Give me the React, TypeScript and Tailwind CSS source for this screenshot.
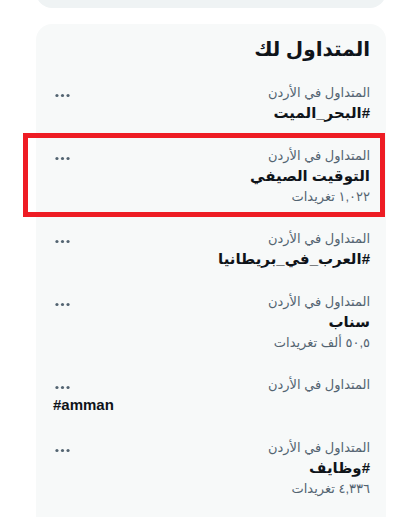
import React from "react";

type Trend = {
  context: string;
  name: string;
  count?: string;
  latin?: boolean;
  highlight?: boolean;
};

const trends: Trend[] = [
  { context: "المتداول في الأردن", name: "#البحر_الميت" },
  {
    context: "المتداول في الأردن",
    name: "التوقيت الصيفي",
    count: "١,٠٢٢ تغريدات",
    highlight: true,
  },
  { context: "المتداول في الأردن", name: "#العرب_في_بريطانيا" },
  { context: "المتداول في الأردن", name: "سناب", count: "٥٠,٥ ألف تغريدات" },
  { context: "المتداول في الأردن", name: "#amman", latin: true },
  { context: "المتداول في الأردن", name: "#وظايف", count: "٤,٣٣٦ تغريدات" },
];

function MoreIcon() {
  return (
    <svg viewBox="0 0 24 24" className="w-[19px] h-[19px] fill-[#536471]">
      <circle cx="5" cy="12" r="2" />
      <circle cx="12" cy="12" r="2" />
      <circle cx="19" cy="12" r="2" />
    </svg>
  );
}

function TrendRow({ trend }: { trend: Trend }) {
  return (
    <div className="relative flex items-start px-4 py-[11px]">
      <div className="flex flex-col flex-1">
        <span className="text-[13px] leading-[19px] text-[#536471]">
          {trend.context}
        </span>
        {trend.latin ? (
          <span
            dir="ltr"
            className="pl-[1px] text-left text-[15px] leading-[22px] font-bold text-[#0f1419]"
          >
            {trend.name}
          </span>
        ) : (
          <span className="text-[15px] leading-[22px] font-bold text-[#0f1419]">
            {trend.name}
          </span>
        )}
        {trend.count && (
          <span className="text-[13px] leading-[20px] text-[#536471]">
            {trend.count}
          </span>
        )}
      </div>
      <div className="absolute left-[17px] top-[14px]">
        <MoreIcon />
      </div>
      {/* إطار التمييز */}
      {trend.highlight && (
        <div className="absolute -left-[13px] right-[1px] top-[-2px] bottom-[1px] border-[5px] border-[#ee1c24] pointer-events-none" />
      )}
    </div>
  );
}

export default function App() {
  return (
    <div
      className="h-[517px] bg-white overflow-hidden"
      style={{ fontFamily: '"Liberation Sans", "DejaVu Sans", sans-serif' }}
    >
      <div className="w-[350px] ml-[36px]">
        <div className="h-[40px] -mt-[32px] rounded-2xl bg-[#eff3f4]" />
        <div dir="rtl" className="mt-[16px] rounded-2xl bg-[#f7f9f9] pb-10">
          <h2 className="px-4 pt-[11px] pb-[9px] text-[20px] leading-[28px] font-extrabold text-[#0f1419]">
            المتداول لك
          </h2>
          {trends.map((t, i) => (
            <TrendRow key={i} trend={t} />
          ))}
        </div>
      </div>
    </div>
  );
}
